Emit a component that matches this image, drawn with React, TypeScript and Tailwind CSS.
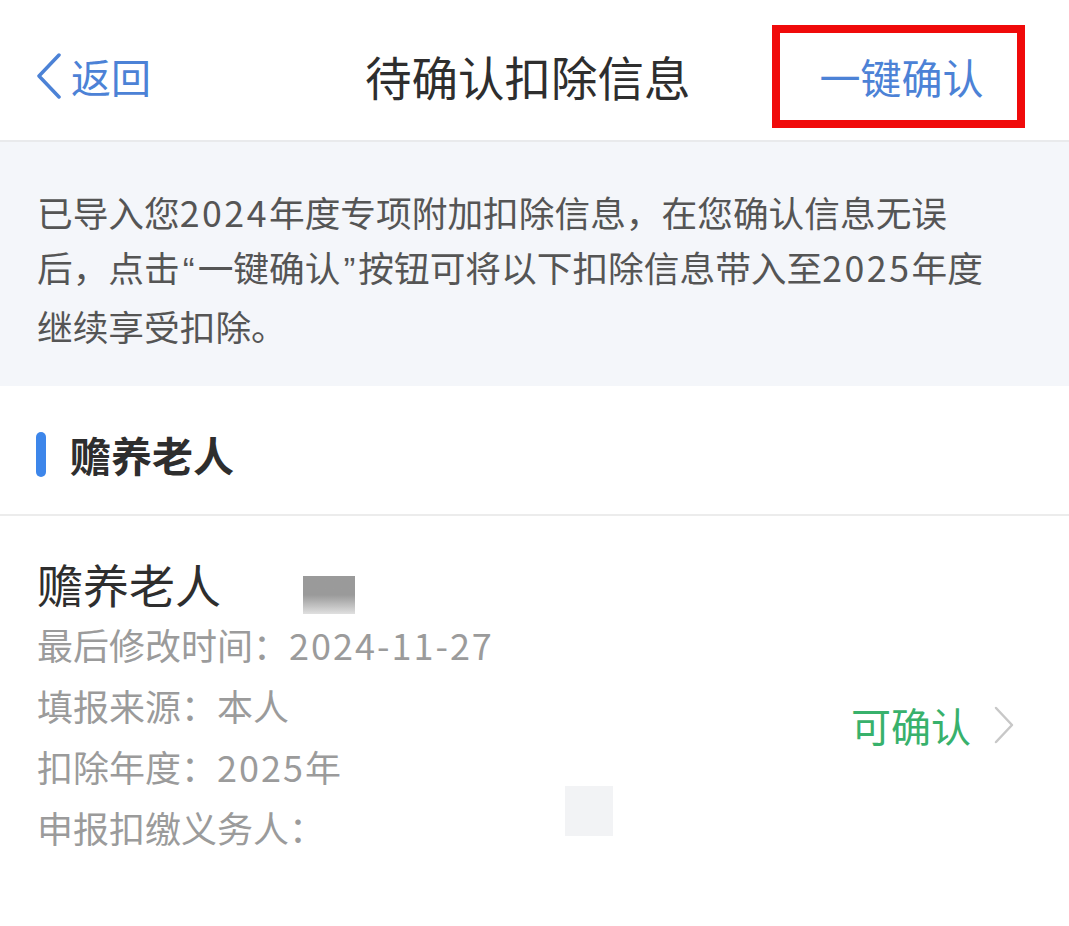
import React from "react";

const font = { fontFamily: '"Noto Sans CJK SC", "Noto Sans", sans-serif' };
const latin = { fontFamily: '"Liberation Sans", sans-serif' };

function D({ children, t = "tracking-[2.5px]" }: { children: React.ReactNode; t?: string }) {
  return <span className={t}>{children}</span>;
}

export default function App() {
  return (
    <div className="w-[1069px] h-[926px] bg-white relative overflow-hidden" style={font}>
      {/* Header */}
      <div className="h-[142px] flex items-center border-b-2 border-[#e9eaec] pt-[12px]">
        <div className="w-[365px] flex items-center pl-[35px]">
          <svg width="28" height="46" viewBox="0 0 28 46" className="mr-[8px]">
            <path d="M24 2 L4 23 L24 44" fill="none" stroke="#4c82d6" strokeWidth="3.5" strokeLinecap="round" strokeLinejoin="round" />
          </svg>
          <span className="text-[40px] leading-none text-[#4c82d6]">返回</span>
        </div>
        <div className="text-[46.5px] leading-none text-[#2e2e2e]">待确认扣除信息</div>
        <div className="ml-auto mr-[44px] w-[253px] h-[103px] border-[8px] border-[#f00a0a] flex items-center justify-center">
          <span className="text-[41px] leading-none text-[#4c82d6] pl-[6px]">一键确认</span>
        </div>
      </div>

      {/* Info */}
      <div className="bg-[#f4f6fa] pt-[42px] pb-[33px] px-[37px] text-[35.7px] leading-[55px] text-[#555555] whitespace-nowrap">
        <div>已导入您<D>2024</D>年度专项附加扣除信息，在您确认信息无误</div>
        <div>
          后，点击<span style={latin} className="px-[3px]">“</span>一键确认<span style={latin} className="px-[3px]">”</span>按钮可将以下扣除信息带入至<D>2025</D>年度
        </div>
        <div>继续享受扣除。</div>
      </div>

      {/* Section header */}
      <div className="h-[130px] flex items-center pl-[36px] pt-[8px] border-b-2 border-[#ececec]">
        <div className="w-[10px] h-[45px] rounded-full bg-[#3d86ea] mr-[24px]" />
        <span className="text-[41px] leading-none font-bold text-[#2e2e2e]">赡养老人</span>
      </div>

      {/* Item */}
      <div className="flex items-start pl-[37px] pt-[37px] relative">
        <div className="flex-1">
          <div className="text-[46px] leading-[61px] text-[#2e2e2e]">赡养老人</div>
          <div className="text-[36px] leading-[61px] text-[#9b9b9b]">最后修改时间：<D t="tracking-[2px]">2024-11-27</D></div>
          <div className="text-[36px] leading-[61px] text-[#9b9b9b]">填报来源：本人</div>
          <div className="text-[36px] leading-[61px] text-[#9b9b9b]">扣除年度：<D t="tracking-[2px]">2025</D>年</div>
          <div className="text-[36px] leading-[61px] text-[#9b9b9b]">申报扣缴义务人：</div>
        </div>
        <div className="flex items-center mt-[152px] mr-[54px]">
          <span className="text-[40px] leading-none text-[#38b16c]">可确认</span>
          <svg width="22" height="40" viewBox="0 0 22 40" className="ml-[22px]">
            <path d="M3 3 L19 20 L3 37" fill="none" stroke="#c8c8c8" strokeWidth="2.5" strokeLinecap="round" strokeLinejoin="round" />
          </svg>
        </div>
        <div className="absolute left-[303px] top-[60px] w-[52px] h-[38px] bg-gradient-to-b from-[#9a9a9a] via-[#9a9a9a] to-[#e0e0e0]" />
        <div className="absolute left-[565px] top-[270px] w-[48px] h-[50px] bg-[#f2f3f5]" />
      </div>
    </div>
  );
}
